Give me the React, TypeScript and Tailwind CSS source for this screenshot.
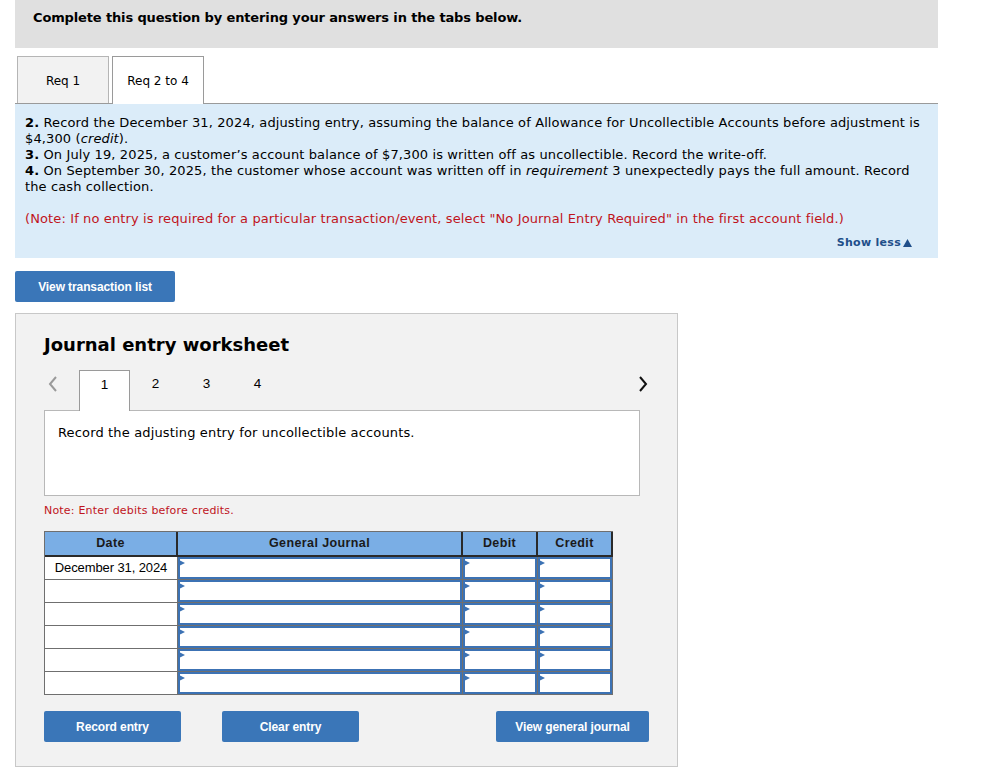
import React from "react";

const verdana = { fontFamily: '"DejaVu Sans", Verdana, sans-serif' };
const arial = { fontFamily: '"Liberation Sans", Arial, sans-serif' };

function Btn({ children, className = "" }: { children: React.ReactNode; className?: string }) {
  return (
    <div
      className={`h-[31px] bg-[#3a76b8] rounded-[2px] text-white font-bold text-[12px] tracking-[-0.1px] flex items-center justify-center ${className}`}
      style={arial}
    >
      {children}
    </div>
  );
}

function InputCell({ w }: { w: string }) {
  return (
    <div className={`${w} h-full border-r border-b border-[#6f6f6f] relative`}>
      <div className="h-full border-2 border-[#3c72b4] bg-white" />
      <div className="absolute left-px top-[3px] w-0 h-0 border-t-[3px] border-b-[3px] border-l-[6px] border-t-transparent border-b-transparent border-l-[#3c72b4]" />
    </div>
  );
}

export default function App() {
  const rows = [0, 1, 2, 3, 4, 5];
  return (
    <div className="w-[983px] min-h-[774px] bg-white px-[15px] text-black" style={verdana}>
      <div className="w-[923px]">
        {/* banner */}
        <div className="h-[48px] bg-[#e0e0e0] pl-[18px] pt-[10px]">
          <div className="text-[13px] leading-[16px] font-bold tracking-[-0.14px]">Complete this question by entering your answers in the tabs below.</div>
        </div>

        {/* tabs */}
        <div className="mt-[8px] flex border-b border-[#9a9a9a] h-[48px]">
          <div className="ml-[2px] w-[92px] h-[47px] bg-[#f2f2f2] border border-b-0 border-[#b5b5b5] flex items-center justify-center text-[12px] pt-px">
            Req 1
          </div>
          <div className="ml-[3px] w-[92px] h-[48px] bg-white border border-b-0 border-[#9a9a9a] flex items-center justify-center text-[12px] relative z-10">
            Req 2 to 4
          </div>
        </div>

        {/* question panel */}
        <div className="bg-[#dbecf9] pl-[10px] pr-[18px] pt-[11px] pb-[7px] text-[13px] leading-[16px] tracking-[0.12px]">
          <p>
            <b>2.</b> Record the December 31, 2024, adjusting entry, assuming the balance of Allowance for Uncollectible Accounts before adjustment is $4,300 (<i>credit</i>).
          </p>
          <p>
            <b>3.</b> On July 19, 2025, a customer’s account balance of $7,300 is written off as uncollectible. Record the write-off.
          </p>
          <p>
            <b>4.</b> On September 30, 2025, the customer whose account was written off in <i>requirement</i> 3 unexpectedly pays the full amount. Record the cash collection.
          </p>
          <p className="mt-[16px] text-[#c0141c]">
            (Note: If no entry is required for a particular transaction/event, select "No Journal Entry Required" in the first account field.)
          </p>
          <div className="mt-[8px] flex justify-end pr-[8px]">
            <span className="text-[11px] font-bold text-[#1f4f8a] tracking-[0.3px] flex items-center gap-[2px]">
              Show less
              <svg width="9" height="8" viewBox="0 0 9 8"><path d="M4.5 0 L9 8 L0 8 Z" fill="#1f4f8a" /></svg>
            </span>
          </div>
        </div>

        <Btn className="mt-[13px] w-[160px]">View transaction list</Btn>

        {/* worksheet */}
        <div className="mt-[11px] w-[663px] h-[454px] bg-[#f2f2f2] border border-[#c8c8c8] pl-[28px] pt-[20px]">
          <div className="text-[18px] leading-[22px] font-bold">Journal entry worksheet</div>

          <div className="mt-[12px] flex items-end h-[42px] w-[604px]">
            <div className="w-[35px] h-[40px] flex items-center pl-[4px] pb-[12px]">
              <svg width="10" height="16" viewBox="0 0 10 16"><path d="M8 1 L2 8 L8 15" fill="none" stroke="#9a9a9a" strokeWidth="2" /></svg>
            </div>
            <div className="w-[51px] h-[41px] bg-white border border-b-0 border-[#9a9a9a] flex items-center justify-center text-[13.5px] relative z-10 -mb-px pb-[12px]" style={arial}>1</div>
            {["2", "3", "4"].map((t) => (
              <div key={t} className="w-[51px] h-[40px] flex items-center justify-center text-[13.5px] pb-[12px]" style={arial}>{t}</div>
            ))}
            <div className="flex-1" />
            <div className="h-[40px] flex items-center pb-[12px]">
              <svg width="10" height="16" viewBox="0 0 10 16"><path d="M2 1 L8 8 L2 15" fill="none" stroke="#111" strokeWidth="2" /></svg>
            </div>
          </div>

          <div className="w-[596px] h-[86px] bg-white border border-[#b8b8b8] pl-[13px] pt-[14px] text-[13px] leading-[16px] tracking-[0.15px]">
            Record the adjusting entry for uncollectible accounts.
          </div>

          <div className="mt-[8px] text-[11px] leading-[13px] text-[#c0141c] tracking-[0.2px]">Note: Enter debits before credits.</div>

          {/* table */}
          <div className="mt-[14px] w-[569px] border-t border-l border-[#6f6f6f]">
            <div className="flex h-[25px] bg-[#7aaee5] text-[12.5px] font-bold text-[#1a1a1a] border-b-2 border-[#2a2a2a]" style={arial}>
              <div className="w-[133px] flex items-center justify-center border-r-2 border-[#2a2a2a] tracking-[0.4px]">Date</div>
              <div className="w-[285px] flex items-center justify-center border-r-2 border-[#2a2a2a] tracking-[0.4px]">General Journal</div>
              <div className="w-[75px] flex items-center justify-center border-r-2 border-[#2a2a2a] tracking-[0.4px]">Debit</div>
              <div className="w-[75px] flex items-center justify-center border-r-2 border-[#2a2a2a] tracking-[0.4px]">Credit</div>
            </div>
            {rows.map((r) => (
              <div key={r} className="flex h-[23px]">
                <div className="w-[133px] h-full bg-white border-r border-b border-[#6f6f6f] flex items-center justify-center text-[13px] tracking-[-0.1px]" style={arial}>
                  {r === 0 ? "December 31, 2024" : ""}
                </div>
                <InputCell w="w-[285px]" />
                <InputCell w="w-[75px]" />
                <InputCell w="w-[75px]" />
              </div>
            ))}
          </div>

          <div className="mt-[16px] flex">
            <Btn className="w-[137px]">Record entry</Btn>
            <Btn className="w-[137px] ml-[41px]">Clear entry</Btn>
            <Btn className="w-[153px] ml-[137px]">View general journal</Btn>
          </div>
        </div>
      </div>
    </div>
  );
}
